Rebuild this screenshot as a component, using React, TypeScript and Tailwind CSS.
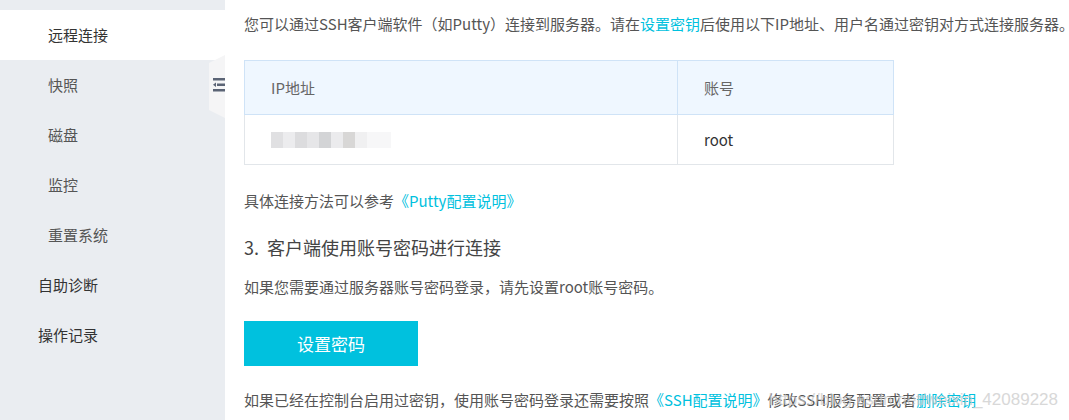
import React from "react";

const subItems = ["远程连接", "快照", "磁盘", "监控", "重置系统"];
const topItems = ["自助诊断", "操作记录"];

function Sidebar() {
  return (
    <aside className="relative w-[225px] shrink-0 bg-[#eaedf1] pt-[10px]">
      {subItems.map((label, i) => (
        <div
          key={label}
          className={
            i === 0
              ? "flex h-[50px] items-center bg-white pl-[48px] text-[#333]"
              : "flex h-[50px] items-center pl-[48px] text-[#555]"
          }
        >
          {label}
        </div>
      ))}
      {topItems.map((label) => (
        <div key={label} className="flex h-[50px] items-center pl-[38px] text-[#333]">
          {label}
        </div>
      ))}

      {/* collapse handle */}
      <div className="absolute right-0 top-[55px] h-[63px] w-[16px]">
        <svg width="16" height="63" viewBox="0 0 16 63" className="absolute inset-0">
          <polygon points="16,0 16,63 0,55 0,8" fill="#f5f5f6" />
        </svg>
        <svg width="12" height="16" viewBox="0 0 12 16" className="absolute left-[4px] top-[22px]">
          <rect x="0" y="1" width="12" height="2.5" fill="#5b6475" />
          <rect x="4" y="6.5" width="8" height="2.5" fill="#5b6475" />
          <polygon points="0,7.75 3,5.5 3,10" fill="#5b6475" />
          <rect x="0" y="12" width="12" height="2.5" fill="#5b6475" />
        </svg>
      </div>
    </aside>
  );
}

function Link({ children }: { children: React.ReactNode }) {
  return <span className="text-[#00c1de]">{children}</span>;
}

export default function App() {
  return (
    <div
      className="relative flex h-[420px] w-[1069px] overflow-hidden bg-white text-[15px] leading-[20px]"
      style={{ fontFamily: '"Microsoft YaHei", "Noto Sans CJK SC", sans-serif' }}
    >
      <Sidebar />

      <main className="flex-1 pl-[19px] text-[#555]">
        <p className="mt-[14px] whitespace-nowrap">
          您可以通过SSH客户端软件（如Putty）连接到服务器。请在<Link>设置密钥</Link>
          后使用以下IP地址、用户名通过密钥对方式连接服务器。
        </p>

        <table className="mt-[26px] w-[650px] border-collapse border border-[#e2e6ea] text-left">
          <thead>
            <tr className="h-[54px] bg-[#eff7ff]">
              <th className="w-[433px] border border-[#cfe3f7] pl-[26px] font-normal text-[#666]">
                IP地址
              </th>
              <th className="border border-[#cfe3f7] pl-[26px] font-normal text-[#666]">账号</th>
            </tr>
          </thead>
          <tbody>
            <tr className="h-[50px]">
              <td className="border border-[#e2e6ea] pl-[26px]">
                <div className="flex h-[16px] w-[120px]">
                  <div className="w-[12px] bg-[#e0e0e2]" />
                  <div className="w-[12px] bg-[#ececee]" />
                  <div className="w-[12px] bg-[#dcdcde]" />
                  <div className="w-[12px] bg-[#e6e6e8]" />
                  <div className="w-[12px] bg-[#d3d4d6]" />
                  <div className="w-[12px] bg-[#ebebed]" />
                  <div className="w-[12px] bg-[#d8d7d6]" />
                  <div className="w-[12px] bg-[#f0f0f1]" />
                  <div className="w-[24px] bg-[#f7f7f8]" />
                </div>
              </td>
              <td className="border border-[#e2e6ea] pl-[26px] text-[#333]">root</td>
            </tr>
          </tbody>
        </table>

        <p className="mt-[26px]">
          具体连接方法可以参考<Link>《Putty配置说明》</Link>
        </p>

        <h3 className="mt-[24px] text-[18px] leading-[24px] text-[#444]">3.&nbsp; 客户端使用账号密码进行连接</h3>

        <p className="mt-[18px]">如果您需要通过服务器账号密码登录，请先设置root账号密码。</p>

        <button className="mt-[24px] flex h-[45px] w-[174px] items-center justify-center bg-[#00c1de] text-[17px] text-white">
          设置密码
        </button>

        <p className="mt-[24px] whitespace-nowrap">
          如果已经在控制台启用过密钥，使用账号密码登录还需要按照<Link>《SSH配置说明》</Link>
          修改SSH服务配置或者<Link>删除密钥</Link>
        </p>
      </main>

      <div
        className="pointer-events-none absolute right-[11px] top-[389px] whitespace-nowrap text-[17px] leading-[22px] text-[#c8c8c8] opacity-70"
        style={{ fontFamily: '"Liberation Sans", Arial, sans-serif' }}
      >
        https://blog.csdn.net/weixin_42089228
      </div>
    </div>
  );
}
